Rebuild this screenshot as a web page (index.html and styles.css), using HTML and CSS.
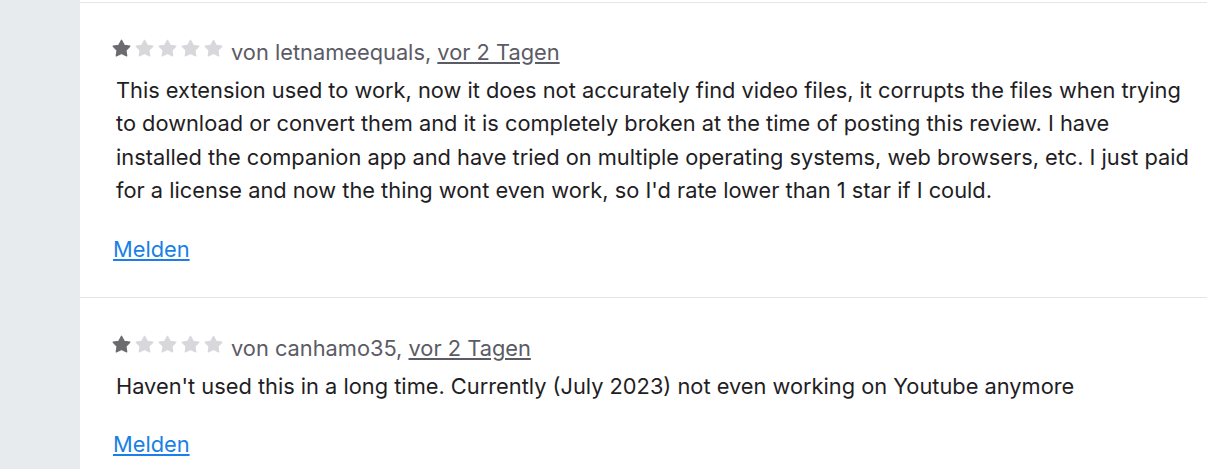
FILE: index.html
```html
<!DOCTYPE html>
<html>
<head>
    <title>Bewertungen</title>
    <link rel="stylesheet" href="styles.css">
</head>
<body>

<div class="page">
    <div class="sidebar"></div>
    <div class="main">

        <div class="review">
            <div class="meta">
                <div class="stars">
                    <svg class="star on" viewBox="0 0 24 24"><path d="M12 1.5L15.5 7.9 22.5 9.1 17.6 14.3 18.6 21.4 12 18.3 5.4 21.4 6.4 14.3 1.5 9.1 8.5 7.9z"/></svg>
                    <svg class="star" viewBox="0 0 24 24"><path d="M12 1.5L15.5 7.9 22.5 9.1 17.6 14.3 18.6 21.4 12 18.3 5.4 21.4 6.4 14.3 1.5 9.1 8.5 7.9z"/></svg>
                    <svg class="star" viewBox="0 0 24 24"><path d="M12 1.5L15.5 7.9 22.5 9.1 17.6 14.3 18.6 21.4 12 18.3 5.4 21.4 6.4 14.3 1.5 9.1 8.5 7.9z"/></svg>
                    <svg class="star" viewBox="0 0 24 24"><path d="M12 1.5L15.5 7.9 22.5 9.1 17.6 14.3 18.6 21.4 12 18.3 5.4 21.4 6.4 14.3 1.5 9.1 8.5 7.9z"/></svg>
                    <svg class="star" viewBox="0 0 24 24"><path d="M12 1.5L15.5 7.9 22.5 9.1 17.6 14.3 18.6 21.4 12 18.3 5.4 21.4 6.4 14.3 1.5 9.1 8.5 7.9z"/></svg>
                </div>
                <span>von letnameequals, <a href="#" class="date">vor 2 Tagen</a></span>
            </div>
            <p class="body">This extension used to work, now it does not accurately find video files, it corrupts the files when trying to download or convert them and it is completely broken at the time of posting this review. I have installed the companion app and have tried on multiple operating systems, web browsers, etc. I just paid for a license and now the thing wont even work, so I'd rate lower than 1 star if I could.</p>
            <a href="#" class="report">Melden</a>
        </div>

        <div class="review">
            <div class="meta">
                <div class="stars">
                    <svg class="star on" viewBox="0 0 24 24"><path d="M12 1.5L15.5 7.9 22.5 9.1 17.6 14.3 18.6 21.4 12 18.3 5.4 21.4 6.4 14.3 1.5 9.1 8.5 7.9z"/></svg>
                    <svg class="star" viewBox="0 0 24 24"><path d="M12 1.5L15.5 7.9 22.5 9.1 17.6 14.3 18.6 21.4 12 18.3 5.4 21.4 6.4 14.3 1.5 9.1 8.5 7.9z"/></svg>
                    <svg class="star" viewBox="0 0 24 24"><path d="M12 1.5L15.5 7.9 22.5 9.1 17.6 14.3 18.6 21.4 12 18.3 5.4 21.4 6.4 14.3 1.5 9.1 8.5 7.9z"/></svg>
                    <svg class="star" viewBox="0 0 24 24"><path d="M12 1.5L15.5 7.9 22.5 9.1 17.6 14.3 18.6 21.4 12 18.3 5.4 21.4 6.4 14.3 1.5 9.1 8.5 7.9z"/></svg>
                    <svg class="star" viewBox="0 0 24 24"><path d="M12 1.5L15.5 7.9 22.5 9.1 17.6 14.3 18.6 21.4 12 18.3 5.4 21.4 6.4 14.3 1.5 9.1 8.5 7.9z"/></svg>
                </div>
                <span>von canhamo35, <a href="#" class="date">vor 2 Tagen</a></span>
            </div>
            <p class="body">Haven't used this in a long time. Currently (July 2023) not even working on Youtube anymore</p>
            <a href="#" class="report">Melden</a>
        </div>

    </div>
</div>

</body>
</html>
```

FILE: styles.css
```css
body {
    margin: 0;
    font-family: Inter, "Noto Sans", sans-serif;
    font-size: 21.8px;
    color: #1f1e24;
    background-color: white;
}
.page {
    display: flex;
    min-height: 469px;
}
.sidebar {
    width: 80px;
    flex-shrink: 0;
    background-color: #e8ebee;
}
.main {
    flex: 1;
    padding-top: 2px;
}
.review {
    border-top: 1px solid #e5e5e8;
    padding: 33px 10px 31px 33px;
}
.review + .review {
    padding-top: 34px;
}
.meta {
    display: flex;
    align-items: center;
    line-height: 33px;
    color: #5b5b66;
}
.stars {
    display: flex;
    gap: 4px;
    margin-left: -1px;
    margin-right: 8px;
    margin-bottom: 8px;
}
.star {
    width: 19px;
    height: 19px;
    fill: #d8d8dc;
    stroke: #d8d8dc;
    stroke-width: 1.6;
    stroke-linejoin: round;
}
.star.on {
    fill: #6b6b70;
    stroke: #6b6b70;
}
.date {
    color: #5b5b66;
}
.body {
    margin: 5px 0 0 3px;
    line-height: 33.4px;
}
.report {
    display: inline-block;
    margin-top: 25px;
    line-height: 33px;
    color: #1a7fe6;
}
```
